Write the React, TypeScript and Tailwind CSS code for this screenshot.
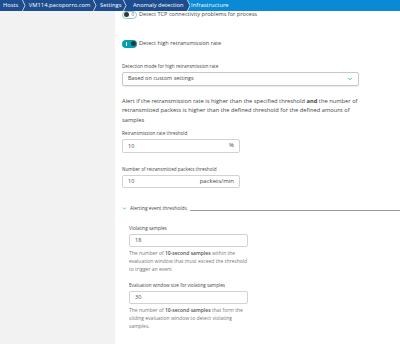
import { ChevronDown } from "lucide-react";

const CRUMBS = [
  { label: "Hosts", cls: "pl-[3px] pr-[4px]" },
  { label: "VM114.pacoporro.com", cls: "pl-[3px] pr-[3px]" },
  { label: "Settings", cls: "pl-[3px] pr-[2px]" },
  { label: "Anomaly detection", cls: "pl-[6px] pr-[3px]" }
];

function Sep({ last = false }: { last?: boolean }) {
  return (
    <svg width="3.5" height="11" viewBox="0 0 3.5 11" className="shrink-0">
      {last ? <polygon points="0.4,0 3.5,0 3.5,11 0.4,11 3,5.5" fill="#0a8ad4" /> : null}
      <polyline points="0.4,0 3,5.5 0.4,11" fill="none" stroke="#ffffff" strokeWidth="0.7" />
    </svg>
  );
}

function Toggle({ on }: { on: boolean }) {
  if (on) {
    return (
      <div className="flex h-[8px] w-[15px] shrink-0 items-center justify-between rounded-full bg-[#00a1b2] px-[1.5px]">
        <span className="ml-[2px] h-[4px] w-[0.8px] bg-white" />
        <span className="size-[5px] rounded-full bg-[#353535]" />
      </div>
    );
  }
  return (
    <div className="flex h-[8px] w-[15px] shrink-0 items-center justify-between rounded-full border border-[#7fd0d8] bg-white px-[1px]">
      <span className="size-[5px] rounded-full bg-[#353535]" />
      <span className="mr-[1px] text-[4.5px] leading-none text-[#555]">0</span>
    </div>
  );
}

function Field({ label, value, unit, width }: { label: string; value: string; unit?: string; width: string }) {
  return (
    <div>
      <p className="text-[4.65px] leading-[8px] text-[#454646]">{label}</p>
      <div className={`mt-[2px] flex h-[13.5px] items-center justify-between rounded-[2px] border border-[#d2d2d2] bg-white px-[5px] text-[5.5px] text-[#454646] ${width}`}>
        <span>{value}</span>
        {unit ? <span className="text-[6px]">{unit}</span> : null}
      </div>
    </div>
  );
}

export default function App() {
  return (
    <div className="flex h-[344px] w-[400px] flex-col overflow-hidden bg-white font-['Open_Sans',sans-serif] text-[#454646]">
      <nav className="flex h-[11px] shrink-0 items-center bg-[#1d4d8f] text-[5.8px] text-white">
        {CRUMBS.map((c, i) => (
          <div key={c.label} className="flex h-full items-center">
            <span className={`shrink-0 whitespace-nowrap ${c.cls}`}>{c.label}</span>
            <Sep last={i === CRUMBS.length - 1} />
          </div>
        ))}
        <div className="flex h-full flex-1 items-center bg-[#0a8ad4] pl-[1px]">Infrastructure</div>
      </nav>

      <div className="flex flex-1">
        <aside className="w-[115px] shrink-0 bg-[#f2f2f2]" />
        <main className="flex-1 pl-[7px]">
          <div className="-mt-[0.5px] flex h-[8px] items-center gap-[2px] text-[5.6px]">
            <Toggle on={false} />
            <span>Detect TCP connectivity problems for process</span>
          </div>
          <div className="mt-[21px] flex h-[8px] items-center gap-[2px] text-[5.6px]">
            <Toggle on />
            <span>Detect high retransmission rate</span>
          </div>

          <p className="mt-[14px] text-[4.65px] leading-[8px]">Detection mode for high retransmission rate</p>
          <div className="mt-[2px] flex h-[14px] w-[237px] items-center justify-between rounded-[2px] border border-[#c8c8c8] px-[5px] text-[5.5px] shadow-[0_1px_1px_rgba(0,0,0,0.08)]">
            <span>Based on custom settings</span>
            <ChevronDown className="size-[6px] text-[#00a1b2]" strokeWidth={3} />
          </div>

          <p className="mt-[11px] w-[240px] text-[5.75px] leading-[9.5px]">
            Alert if the retransmission rate is higher than the specified threshold <b>and</b> the number of retransmitted packets is higher than the defined threshold for the defined amount of samples
          </p>

          <div className="mt-[4px]">
            <Field label="Retransmission rate threshold" value="10" unit="%" width="w-[118px]" />
          </div>
          <div className="mt-[12px]">
            <Field label="Number of retransmitted packets threshold" value="10" unit="packets/min" width="w-[118px]" />
          </div>

          <div className="mt-[17px] flex items-center gap-[3px] text-[4.85px]">
            <ChevronDown className="size-[5px] text-[#00a1b2]" strokeWidth={3} />
            <span className="whitespace-nowrap">Alerting event thresholds</span>
            <span className="mt-[3px] h-px flex-1 bg-[#9a9a9a]" />
          </div>

          <div className="pl-[7px]">
            <div className="mt-[11.5px]">
              <Field label="Violating samples" value="18" width="w-[119px]" />
            </div>
            <p className="mt-[1.5px] whitespace-nowrap text-[5px] leading-[8px] text-[#777]">
              The number of <b className="font-semibold text-[#555]">10-second samples</b> within the
              <br />
              evaluation window that must exceed the threshold
              <br />
              to trigger an event
            </p>
            <div className="mt-[8px]">
              <Field label="Evaluation window size for violating samples" value="30" width="w-[119px]" />
            </div>
            <p className="mt-[1.5px] whitespace-nowrap text-[5px] leading-[8px] text-[#777]">
              The number of <b className="font-semibold text-[#555]">10-second samples</b> that form the
              <br />
              sliding evaluation window to detect violating
              <br />
              samples.
            </p>
          </div>
        </main>
      </div>
    </div>
  );
}
